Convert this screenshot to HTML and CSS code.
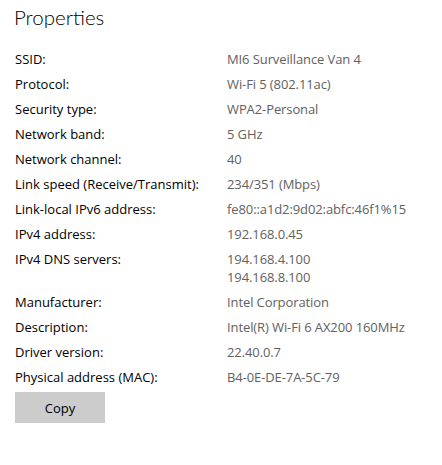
FILE: index.html
```html
<!DOCTYPE html>
<html>
<head>
<meta charset="utf-8">
<link rel="stylesheet" href="styles.css">
</head>
<body>
<div class="page">
  <h1 class="title">Properties</h1>
  <div class="props">
    <div class="label">SSID:</div><div class="value">MI6 Surveillance Van 4</div>
    <div class="label">Protocol:</div><div class="value">Wi-Fi 5 (802.11ac)</div>
    <div class="label">Security type:</div><div class="value">WPA2-Personal</div>
    <div class="label">Network band:</div><div class="value">5 GHz</div>
    <div class="label">Network channel:</div><div class="value">40</div>
    <div class="label">Link speed (Receive/Transmit):</div><div class="value">234/351 (Mbps)</div>
    <div class="label">Link-local IPv6 address:</div><div class="value">fe80::a1d2:9d02:abfc:46f1%15</div>
    <div class="label">IPv4 address:</div><div class="value">192.168.0.45</div>
    <div class="label">IPv4 DNS servers:</div><div class="value">194.168.4.100<br>194.168.8.100</div>
    <div class="label">Manufacturer:</div><div class="value">Intel Corporation</div>
    <div class="label">Description:</div><div class="value">Intel(R) Wi-Fi 6 AX200 160MHz</div>
    <div class="label">Driver version:</div><div class="value">22.40.0.7</div>
    <div class="label">Physical address (MAC):</div><div class="value">B4-0E-DE-7A-5C-79</div>
  </div>
  <button class="copy">Copy</button>
</div>
</body>
</html>
```
FILE: styles.css
```css
html, body {
  margin: 0;
  padding: 0;
  background: #ffffff;
}
.page {
  padding: 3px 0 0 15px;
  font-family: "Open Sans", "Noto Sans", sans-serif;
  font-size: 13px;
  color: #000;
}
.title {
  margin: 0 0 0 -1px;
  font-family: "Lato", "Open Sans", sans-serif;
  font-size: 20.5px;
  font-weight: 300;
  line-height: 29px;
  color: #000;
}
.props {
  display: grid;
  grid-template-columns: 212px auto;
  margin-top: 18px;
}
.label, .value {
  line-height: 18px;
  padding-bottom: 7px;
}
.value {
  color: #616161;
  letter-spacing: -0.1px;
}
.copy {
  display: block;
  width: 90px;
  height: 31px;
  margin-top: -1px;
  border: none;
  background: #cccccc;
  font-family: "Open Sans", "Noto Sans", sans-serif;
  font-size: 13px;
  color: #000;
  padding: 0;
}
```
